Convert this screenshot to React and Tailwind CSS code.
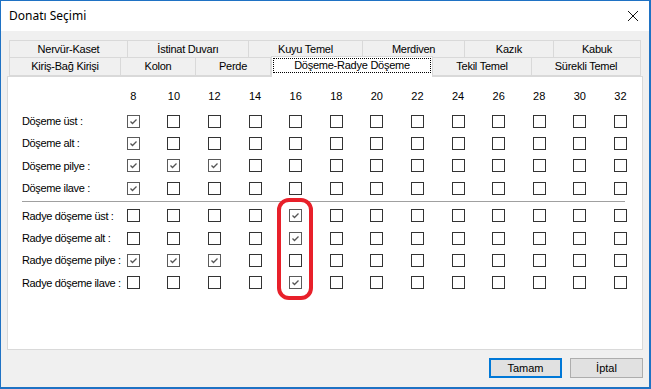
import React from "react";

const sizes = [8, 10, 12, 14, 16, 18, 20, 22, 24, 26, 28, 30, 32];

const topTabs = [
  { label: "Nervür-Kaset", w: "w-[119px]" },
  { label: "İstinat Duvarı", w: "w-[121px]" },
  { label: "Kuyu Temel", w: "w-[114px]" },
  { label: "Merdiven", w: "w-[102px]" },
  { label: "Kazık", w: "w-[89px]" },
  { label: "Kabuk", w: "w-[87px]" },
];

const bottomTabs = [
  { label: "Kiriş-Bağ Kirişi", w: "w-[112px]" },
  { label: "Kolon", w: "w-[75px]" },
  { label: "Perde", w: "w-[75px]" },
  { label: "Döşeme-Radye Döşeme", w: "w-[162px]", active: true },
  { label: "Tekil Temel", w: "w-[99px]" },
  { label: "Sürekli Temel", w: "w-[109px]" },
];

const slabRows = [
  { label: "Döşeme üst :", on: [8] },
  { label: "Döşeme alt :", on: [8] },
  { label: "Döşeme pilye :", on: [8, 10, 12] },
  { label: "Döşeme ilave :", on: [8] },
];

const raftRows = [
  { label: "Radye döşeme üst :", on: [16] },
  { label: "Radye döşeme alt :", on: [16] },
  { label: "Radye döşeme pilye :", on: [8, 10, 12] },
  { label: "Radye döşeme ilave :", on: [16] },
];

function CheckBox({ checked }) {
  return (
    <div
      className={`w-[13px] h-[13px] border bg-white flex items-center justify-center ${
        checked ? "border-[#5a5a5a]" : "border-[#333333]"
      }`}
    >
      {checked && (
        <svg width="11" height="11" viewBox="0 0 11 11">
          <path d="M2.5 5.5 L4.5 7.5 L8.5 3.5" fill="none" stroke="#555555" strokeWidth="1.3" />
        </svg>
      )}
    </div>
  );
}

function Row({ row }) {
  return (
    <div className="grid grid-cols-[91px_repeat(13,40.6px)] h-[22.4px] items-center">
      <div className="whitespace-nowrap overflow-visible tracking-[-0.35px]">{row.label}</div>
      {sizes.map((s) => (
        <div key={s} className="flex justify-center">
          <CheckBox checked={row.on.includes(s)} />
        </div>
      ))}
    </div>
  );
}

export default function App() {
  return (
    <div className="w-[651px] h-[389px] bg-[#f0f0f0] border border-[#1f72c4] border-r-2 border-b-2 flex flex-col font-['Liberation_Sans',Arial,sans-serif] text-[11px] text-black">
      {/* baslik */}
      <div className="h-[30px] bg-white flex items-center justify-between pl-[8px] pr-[10px] shrink-0">
        <span className="font-['Noto_Sans',sans-serif] text-[12px]">Donatı Seçimi</span>
        <svg width="12" height="12" viewBox="0 0 12 12">
          <path d="M1 1 L11 11 M11 1 L1 11" stroke="#111" strokeWidth="1" />
        </svg>
      </div>

      <div className="px-[6px] pt-[9px] flex flex-col flex-1">
        {/* sekmeler */}
        <div className="pl-[2px] pr-[2px] tracking-[-0.25px]">
          <div className="flex h-[18px]">
            {topTabs.map((t) => (
              <div
                key={t.label}
                className={`${t.w} border border-[#d9d9d9] border-l-0 first:border-l flex items-center justify-center`}
              >
                {t.label}
              </div>
            ))}
          </div>
          <div className="flex h-[18px]">
            {bottomTabs.map((t) =>
              t.active ? (
                <div
                  key={t.label}
                  className={`${t.w} relative z-10 -mt-[2px] h-[21px] bg-white border border-b-0 border-[#d9d9d9] p-[1px]`}
                >
                  <div className="h-[15px] border border-dotted border-black flex items-center justify-center">
                    {t.label}
                  </div>
                </div>
              ) : (
                <div
                  key={t.label}
                  className={`${t.w} border-r border-b border-[#d9d9d9] first:border-l flex items-center justify-center`}
                >
                  {t.label}
                </div>
              )
            )}
          </div>
        </div>

        {/* panel */}
        <div className="relative h-[274px] bg-white border border-[#d9d9d9] pl-[14px] pt-[9px]">
          <div className="grid grid-cols-[91px_repeat(13,40.6px)] h-[20px] items-center">
            <div />
            {sizes.map((s) => (
              <div key={s} className="text-center">{s}</div>
            ))}
          </div>
          <div className="mt-[4px]">
            {slabRows.map((r) => (
              <Row key={r.label} row={r} />
            ))}
          </div>
          <div className="w-[603px] h-px bg-[#a0a0a0] mt-[1px] mb-[3px]" />
          <div>
            {raftRows.map((r) => (
              <Row key={r.label} row={r} />
            ))}
          </div>

          {/* kirmizi isaret */}
          <div className="absolute left-[269px] top-[121px] w-[36px] h-[102px] border-[4px] border-[#e8202a] rounded-[12px]" />
        </div>

        {/* butonlar */}
        <div className="flex justify-end gap-[8px] mt-[8px]">
          <button className="w-[73px] h-[20px] bg-[#e1e1e1] border-2 border-[#0078d7] text-[11px]">
            Tamam
          </button>
          <button className="w-[73px] h-[20px] bg-[#e1e1e1] border border-[#adadad] text-[11px]">
            İptal
          </button>
        </div>
      </div>
    </div>
  );
}
